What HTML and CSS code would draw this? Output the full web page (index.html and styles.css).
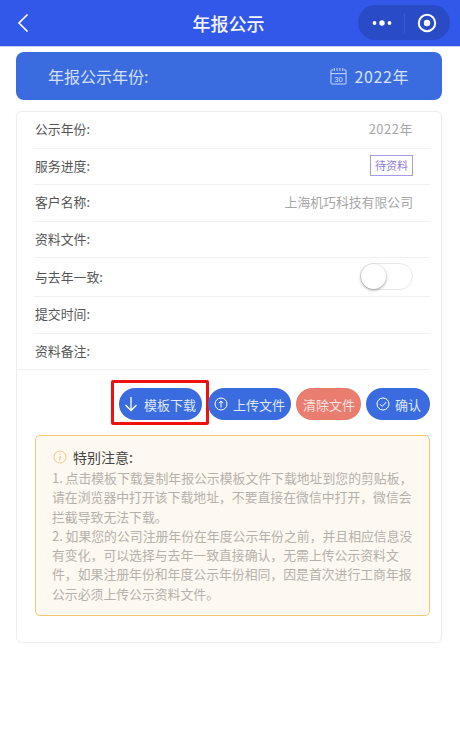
FILE: index.html
```html
<!DOCTYPE html>
<html lang="zh-CN">
<head>
<meta charset="utf-8">
<title>年报公示</title>
<link rel="stylesheet" href="styles.css">
</head>
<body>
<header class="nav">
  <svg class="back" width="14" height="20" viewBox="0 0 14 20"><path d="M11.500 1.500 3 10l8.500 8.500" fill="none" stroke="#fff" stroke-width="1.700"/></svg>
  <h1 class="nav-title">年报公示</h1>
  <div class="capsule">
    <svg class="capsule-dots" width="20" height="8" viewBox="0 0 20 8"><circle cx="2.500" cy="4" r="1.900" fill="#fff"/><circle cx="10" cy="4" r="2.700" fill="#fff"/><circle cx="17.500" cy="4" r="1.900" fill="#fff"/></svg>
    <span class="capsule-sep"></span>
    <svg class="capsule-target" width="20" height="20" viewBox="0 0 20 20"><circle cx="10" cy="10" r="8.200" fill="none" stroke="#fff" stroke-width="2"/><circle cx="10" cy="10" r="3.200" fill="#fff"/></svg>
  </div>
</header>

<section class="banner">
  <span class="banner-label">年报公示年份:</span>
  <span class="banner-value">
    <svg width="17" height="18" viewBox="0 0 18 19"><path d="M3.500 3H2a1 1 0 0 0-1 1v13a1 1 0 0 0 1 1h14a1 1 0 0 0 1-1V4a1 1 0 0 0-1-1h-1.500M1 7h16M4.500 1v3M7.500 1v3M10.500 1v3M13.500 1v3" fill="none" stroke="#d5e0f8" stroke-width="1"/><text x="9" y="15.500" text-anchor="middle" class="cal-num">30</text></svg>
    <span class="wide-digits">2022年</span>
  </span>
</section>

<main class="card">
  <div class="row"><span>公示年份:</span><span class="muted wide-digits">2022年</span></div>
  <div class="row"><span>服务进度:</span><span class="tag">待资料</span></div>
  <div class="row"><span>客户名称:</span><span class="muted">上海机巧科技有限公司</span></div>
  <div class="row"><span>资料文件:</span></div>
  <div class="row row-tall"><span>与去年一致:</span><span class="switch"><span class="knob"></span></span></div>
  <div class="row"><span>提交时间:</span></div>
  <div class="row row-last"><span>资料备注:</span></div>

  <div class="actions">
    <button class="btn btn-marked">
      <svg width="14" height="16" viewBox="0 0 14 16"><path d="M7 1v13.500M1.500 9 7 14.500 12.500 9" fill="none" stroke="#fff" stroke-width="1.300"/></svg>
      模板下载
    </button>
    <button class="btn">
      <svg width="14" height="14" viewBox="0 0 14 14"><circle cx="7" cy="7" r="6" fill="none" stroke="#fff" stroke-width="1"/><path d="M7 10.500V4M4.800 6.200 7 4l2.200 2.200" fill="none" stroke="#fff" stroke-width="1"/></svg>
      上传文件
    </button>
    <button class="btn btn-danger">清除文件</button>
    <button class="btn btn-confirm">
      <svg width="14" height="14" viewBox="0 0 14 14"><circle cx="7" cy="7" r="6" fill="none" stroke="#fff" stroke-width="1"/><path d="M4 7.200 6.200 9.400 10.300 5" fill="none" stroke="#fff" stroke-width="1"/></svg>
      确认
    </button>
  </div>

  <aside class="notice">
    <div class="notice-head">
      <svg width="14" height="14" viewBox="0 0 14 14"><circle cx="7" cy="7" r="6" fill="none" stroke="#f3c98a" stroke-width="1"/><path d="M7.400 3.600v1.200M7.300 6 6.600 10.400" fill="none" stroke="#f3c98a" stroke-width="1.200"/></svg>
      <strong>特别注意:</strong>
    </div>
    <p class="notice-text">1. 点击模板下载复制年报公示模板文件下载地址到您的剪贴板，请在浏览器中打开该下载地址，不要直接在微信中打开，微信会拦截导致无法下载。</p>
    <p class="notice-text">2. 如果您的公司注册年份在年度公示年份之前，并且相应信息没有变化，可以选择与去年一致直接确认，无需上传公示资料文件，如果注册年份和年度公示年份相同，因是首次进行工商年报公示必须上传公示资料文件。</p>
  </aside>
</main>
</body>
</html>
```
FILE: styles.css
```css
* { box-sizing: border-box; }
html, body { margin: 0; padding: 0; }
body {
  width: 460px;
  height: 736px;
  overflow: hidden;
  background: #fff;
  font-family: "Noto Sans CJK SC", "Noto Sans", sans-serif;
  color: #555;
  font-size: 13px;
}
.nav {
  height: 47px;
  background: #3258ea;
  border-bottom: 1px solid #c4cdf0;
  display: flex;
  align-items: center;
  justify-content: center;
  position: relative;
}
.back { position: absolute; left: 16px; top: 13px; }
.nav-title {
  margin: 0 3px 1px 0;
  color: #f4f6fe;
  font-size: 18px;
  font-weight: 500;
  line-height: 24px;
}
.capsule {
  position: absolute;
  right: 10px;
  top: 5px;
  width: 92px;
  height: 35px;
  border-radius: 18px;
  background: #2a4bc6;
  display: flex;
  align-items: center;
  padding-left: 14px;
}
.capsule-sep { width: 1px; height: 20px; background: #3a5ad0; margin: 0 12px; }
.capsule-dots { flex: none; }
.capsule-target { flex: none; }

.banner {
  margin: 5px 16px 0 16px;
  height: 48px;
  width: 426px;
  background: #3a6ce0;
  border-radius: 8px;
  display: flex;
  align-items: center;
  justify-content: space-between;
  padding: 0 33px 0 32px;
  color: #d5e0f8;
  font-size: 16px;
}
.banner-value { display: flex; align-items: center; gap: 7px; }
.wide-digits { letter-spacing: .6px; }
.cal-num { font-size: 8px; fill: #d5e0f8; font-family: "Liberation Sans", sans-serif; }

.card {
  margin: 11px 0 0 16px;
  width: 426px;
  height: 532px;
  background: #fff;
  border: 1px solid #eeeeee;
  border-radius: 6px;
  padding: 0 11px 0 0;
  box-shadow: 0 0 2px rgba(0,0,0,.04);
}
.row {
  margin-left: 17px;
  height: 36.500px;
  padding: 0 17px 2px 1px;
  border-bottom: 1px solid #f1f1f1;
  display: flex;
  align-items: center;
  justify-content: space-between;
  color: #555;
  font-size: 12.850px;
}
.row-tall { height: 39px; }
.row-last { margin-left: 0; padding-left: 18px; }
.muted { color: #a6a6a6; }
.tag {
  width: 43px;
  height: 21px;
  border: 1px solid #a79ae8;
  color: #8f80e0;
  font-size: 11px;
  display: flex;
  align-items: center;
  justify-content: center;
}
.switch {
  width: 53px;
  height: 27px;
  border: 1px solid #e8e8e8;
  border-radius: 14px;
  background: #fff;
  display: block;
  position: relative;
}
.knob {
  position: absolute;
  left: 0;
  top: 0;
  width: 25px;
  height: 25px;
  border-radius: 50%;
  background: #fff;
  box-shadow: 0 1px 3px rgba(0,0,0,.4);
}

.actions {
  display: flex;
  justify-content: flex-end;
  gap: 5px;
  margin-top: 18px;
}
.btn {
  height: 32px;
  border: 0;
  border-radius: 16px;
  background: #3a6ce0;
  color: #dfe7fa;
  font: inherit;
  font-size: 13px;
  padding: 0 6px 0 6px;
  display: flex;
  align-items: center;
  gap: 5px;
  position: relative;
}
.btn-danger { background: #e97d70; padding: 0 6px 0 7px; color: #fbe3e0; }
.btn-marked { padding: 0 6px 0 5px; gap: 6px; margin-right: 1px; }
.btn-confirm { padding: 0 9px 0 10px; }
.btn-marked::after {
  content: "";
  box-sizing: border-box;
  position: absolute;
  left: -8px;
  top: -8px;
  width: 98px;
  height: 45px;
  border: 3px solid #f01010;
  border-radius: 2px;
}

.notice {
  margin: 15px 0 0 18px;
  height: 181px;
  background: #fdf8f0;
  border: 1px solid #f0c878;
  border-radius: 5px;
  padding: 11px 12px 0 16px;
}
.notice-head {
  display: flex;
  align-items: center;
  gap: 6px;
  height: 20px;
  color: #444;
  font-size: 14px;
  margin-bottom: 1px;
}
.notice-head svg { margin-left: 1px; }
.notice-head strong { font-weight: 400; }
.notice-text {
  margin: 0;
  color: #b5b1ab;
  font-size: 12.850px;
  line-height: 19.300px;
}
```
